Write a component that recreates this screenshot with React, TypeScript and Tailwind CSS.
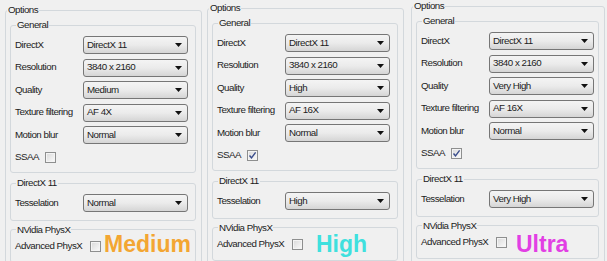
import React from "react";

type Preset = {
  quality: string;
  texture: string;
  tess: string;
  ssaa: boolean;
  tag: string;
  tagClass: string;
  panelClass: string;
};

const presets: Preset[] = [
  {
    quality: "Medium",
    texture: "AF 4X",
    tess: "Normal",
    ssaa: false,
    tag: "Medium",
    tagClass: "ml-[3px] text-[#f3a632] -translate-y-[2px]",
    panelClass: "w-[202px] pt-[4px]",
  },
  {
    quality: "High",
    texture: "AF 16X",
    tess: "High",
    ssaa: true,
    tag: "High",
    tagClass: "ml-[13px] text-[#3fe0de]",
    panelClass: "w-[204px] pt-[2px]",
  },
  {
    quality: "Very High",
    texture: "AF 16X",
    tess: "Very High",
    ssaa: true,
    tag: "Ultra",
    tagClass: "ml-[9px] text-[#e23fe4] translate-y-[2px]",
    panelClass: "w-[201px] pt-0",
  },
];

function Dropdown({ value }: { value: string }) {
  return (
    <div className="h-[18px] w-[105px] shrink-0 rounded-[3px] border border-[#767676] bg-linear-to-b from-[#f4f4f4] via-[#ebebeb] to-[#d5d5d5] flex items-center justify-between pl-[3px] pr-[5px]">
      <span>{value}</span>
      <svg width="7" height="4" viewBox="0 0 7 4">
        <path d="M0 0h7L3.5 4z" fill="#111" />
      </svg>
    </div>
  );
}

function Check({ checked }: { checked: boolean }) {
  return (
    <span className="w-[11px] h-[11px] shrink-0 border border-[#8e8f8f] bg-linear-to-br from-[#d9d9d9] to-[#fbfbfb] shadow-[inset_0_0_0_1px_#f4f4f4] flex items-center justify-center">
      {checked && (
        <svg width="9" height="9" viewBox="0 0 9 9">
          <path d="M1.5 4.5l2 2.3L7.6 1.4" fill="none" stroke="#3a4d8c" strokeWidth="1.4" />
        </svg>
      )}
    </span>
  );
}

function Group({
  title,
  className,
  children,
}: {
  title: string;
  className: string;
  children: React.ReactNode;
}) {
  return (
    <fieldset className={`border border-[#d3d8dc] rounded-[3px] ml-[4px] mr-[5px] pl-[4px] pr-[4px] ${className}`}>
      <legend className="ml-[1px] px-[1px] leading-[12px]">{title}</legend>
      {children}
    </fieldset>
  );
}

function Row({ label, value }: { label: string; value: string }) {
  return (
    <div className="flex items-center h-[22.5px]">
      <span className="w-[68px] shrink-0 whitespace-nowrap">{label}</span>
      <Dropdown value={value} />
    </div>
  );
}

function Panel({ p }: { p: Preset }) {
  return (
    <div className={`shrink-0 pl-[5px] pr-[2px] ${p.panelClass}`}>
      <fieldset className="border border-[#d3d8dc] rounded-[3px] pb-[20px]">
        <legend className="ml-[1px] px-[1px] leading-[12px]">Options</legend>
        <Group title="General" className="mt-[3px] pt-[3px] pb-[3px]">
          <Row label="DirectX" value="DirectX 11" />
          <Row label="Resolution" value="3840 x 2160" />
          <Row label="Quality" value={p.quality} />
          <Row label="Texture filtering" value={p.texture} />
          <Row label="Motion blur" value="Normal" />
          <div className="flex items-center h-[22.5px]">
            <span className="w-[30px] shrink-0">SSAA</span>
            <Check checked={p.ssaa} />
          </div>
        </Group>
        <Group title="DirectX 11" className="mt-[4px] pt-[3px] pb-[5px]">
          <Row label="Tesselation" value={p.tess} />
        </Group>
        <Group title="NVidia PhysX" className="mt-[3px] pb-[4px]">
          <div className="flex items-center h-[22px]">
            <span className="w-[75px] shrink-0 whitespace-nowrap">Advanced PhysX</span>
            <Check checked={false} />
            <span className={`text-[23px] font-bold leading-none tracking-normal ${p.tagClass}`}>
              {p.tag}
            </span>
          </div>
        </Group>
      </fieldset>
    </div>
  );
}

export default function App() {
  return (
    <div className="w-[607px] h-[261px] overflow-hidden bg-[#f0f0f0] flex font-['Liberation_Sans',Arial,sans-serif] text-[9.75px] tracking-[-0.5px] text-[#1c1c1c]">
      {presets.map((p) => (
        <Panel key={p.tag} p={p} />
      ))}
    </div>
  );
}
